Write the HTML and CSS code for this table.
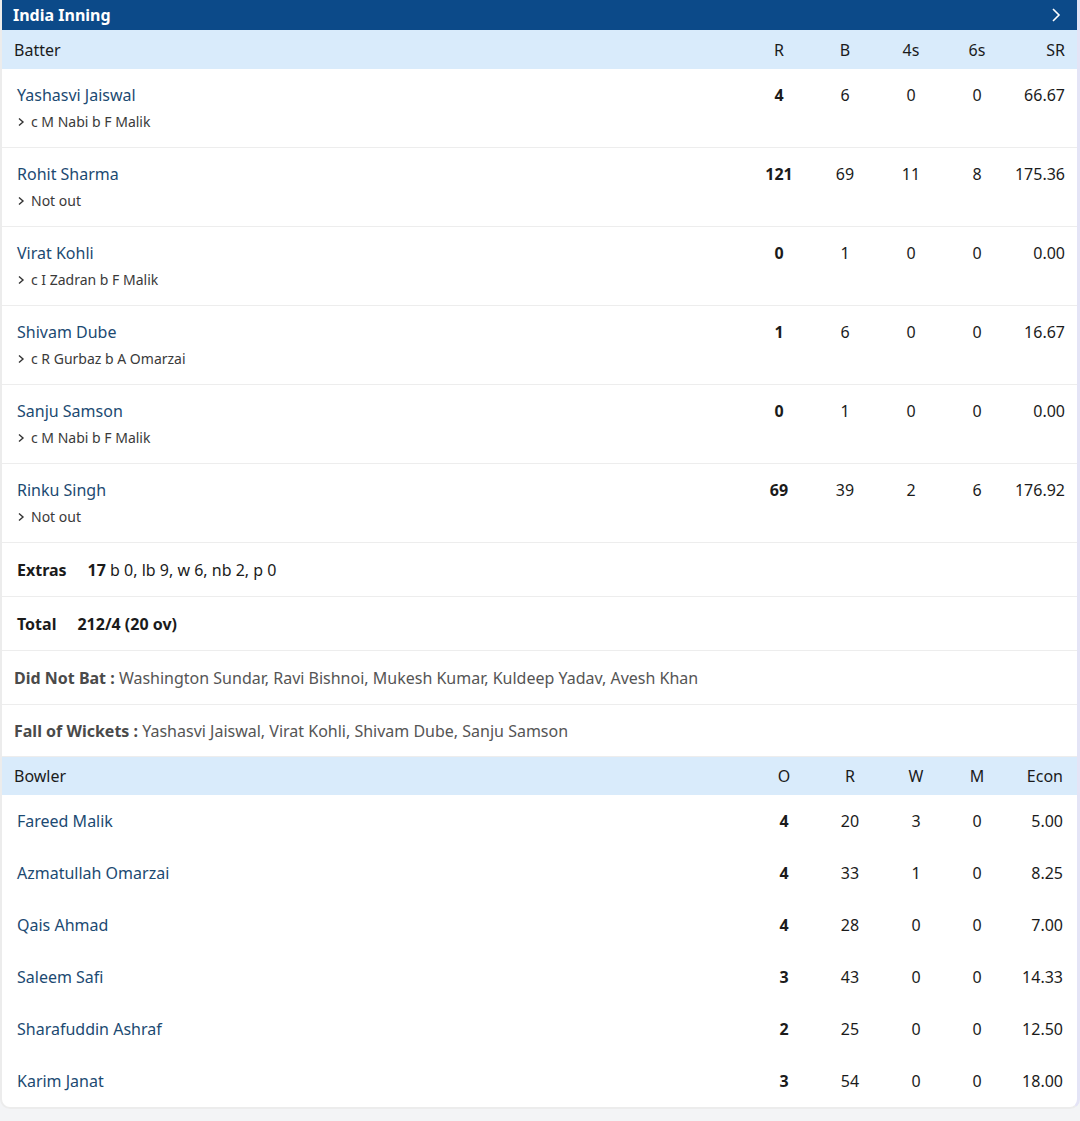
FILE: index.html
```html
<!DOCTYPE html>
<html lang="en">
<head>
    <meta charset="UTF-8">
    <meta name="viewport" content="width=device-width, initial-scale=1.0">
    <title>India Inning</title>
    <link rel="stylesheet" href="styles.css">
</head>
<body>
    <div class="card">
        <div class="inning-head">
            <span>India Inning</span>
            <svg class="chev" width="10" height="16" viewBox="0 0 10 16"><path d="M2 2l6 6-6 6" fill="none" stroke="#fff" stroke-width="1.6"/></svg>
        </div>

        <div class="row bat head">
            <div class="name-col">Batter</div>
            <div>R</div><div>B</div><div>4s</div><div>6s</div><div class="last">SR</div>
        </div>

        <div class="row bat player">
            <div class="name-col">
                <div class="name">Yashasvi Jaiswal</div>
                <div class="out"><svg class="arr" width="8" height="10" viewBox="0 0 8 10"><path d="M2 1.5l4 3.5-4 3.5" fill="none" stroke="#333" stroke-width="1.4"/></svg>c M Nabi b F Malik</div>
            </div>
            <div class="runs">4</div><div>6</div><div>0</div><div>0</div><div class="last">66.67</div>
        </div>
        <div class="row bat player">
            <div class="name-col">
                <div class="name">Rohit Sharma</div>
                <div class="out"><svg class="arr" width="8" height="10" viewBox="0 0 8 10"><path d="M2 1.5l4 3.5-4 3.5" fill="none" stroke="#333" stroke-width="1.4"/></svg>Not out</div>
            </div>
            <div class="runs">121</div><div>69</div><div>11</div><div>8</div><div class="last">175.36</div>
        </div>
        <div class="row bat player">
            <div class="name-col">
                <div class="name">Virat Kohli</div>
                <div class="out"><svg class="arr" width="8" height="10" viewBox="0 0 8 10"><path d="M2 1.5l4 3.5-4 3.5" fill="none" stroke="#333" stroke-width="1.4"/></svg>c I Zadran b F Malik</div>
            </div>
            <div class="runs">0</div><div>1</div><div>0</div><div>0</div><div class="last">0.00</div>
        </div>
        <div class="row bat player">
            <div class="name-col">
                <div class="name">Shivam Dube</div>
                <div class="out"><svg class="arr" width="8" height="10" viewBox="0 0 8 10"><path d="M2 1.5l4 3.5-4 3.5" fill="none" stroke="#333" stroke-width="1.4"/></svg>c R Gurbaz b A Omarzai</div>
            </div>
            <div class="runs">1</div><div>6</div><div>0</div><div>0</div><div class="last">16.67</div>
        </div>
        <div class="row bat player">
            <div class="name-col">
                <div class="name">Sanju Samson</div>
                <div class="out"><svg class="arr" width="8" height="10" viewBox="0 0 8 10"><path d="M2 1.5l4 3.5-4 3.5" fill="none" stroke="#333" stroke-width="1.4"/></svg>c M Nabi b F Malik</div>
            </div>
            <div class="runs">0</div><div>1</div><div>0</div><div>0</div><div class="last">0.00</div>
        </div>
        <div class="row bat player">
            <div class="name-col">
                <div class="name">Rinku Singh</div>
                <div class="out"><svg class="arr" width="8" height="10" viewBox="0 0 8 10"><path d="M2 1.5l4 3.5-4 3.5" fill="none" stroke="#333" stroke-width="1.4"/></svg>Not out</div>
            </div>
            <div class="runs">69</div><div>39</div><div>2</div><div>6</div><div class="last">176.92</div>
        </div>

        <div class="line-row">
            <b class="lbl">Extras</b><b>17</b> b 0, lb 9, w 6, nb 2, p 0
        </div>
        <div class="line-row">
            <b class="lbl">Total</b><b>212/4 (20 ov)</b>
        </div>
        <div class="info-row">
            <b>Did Not Bat :</b> Washington Sundar, Ravi Bishnoi, Mukesh Kumar, Kuldeep Yadav, Avesh Khan
        </div>
        <div class="info-row">
            <b>Fall of Wickets :</b> Yashasvi Jaiswal, Virat Kohli, Shivam Dube, Sanju Samson
        </div>

        <div class="row bowl head">
            <div class="name-col">Bowler</div>
            <div>O</div><div>R</div><div>W</div><div>M</div><div class="last">Econ</div>
        </div>

        <div class="row bowl bowler">
            <div class="name">Fareed Malik</div>
            <div class="runs">4</div><div>20</div><div>3</div><div>0</div><div class="last">5.00</div>
        </div>
        <div class="row bowl bowler">
            <div class="name">Azmatullah Omarzai</div>
            <div class="runs">4</div><div>33</div><div>1</div><div>0</div><div class="last">8.25</div>
        </div>
        <div class="row bowl bowler">
            <div class="name">Qais Ahmad</div>
            <div class="runs">4</div><div>28</div><div>0</div><div>0</div><div class="last">7.00</div>
        </div>
        <div class="row bowl bowler">
            <div class="name">Saleem Safi</div>
            <div class="runs">3</div><div>43</div><div>0</div><div>0</div><div class="last">14.33</div>
        </div>
        <div class="row bowl bowler">
            <div class="name">Sharafuddin Ashraf</div>
            <div class="runs">2</div><div>25</div><div>0</div><div>0</div><div class="last">12.50</div>
        </div>
        <div class="row bowl bowler">
            <div class="name">Karim Janat</div>
            <div class="runs">3</div><div>54</div><div>0</div><div>0</div><div class="last">18.00</div>
        </div>
    </div>
</body>
</html>
```

FILE: styles.css
```css
body {
    margin: 0;
    background-color: #f3f4f6;
    font-family: "Noto Sans", "Open Sans", sans-serif;
    font-size: 16px;
    color: #1b1b1b;
}

.card {
    background-color: #fff;
    border-left: 2px solid #ececec;
    border-right: 3px solid #e4e4f6;
    border-bottom: 2px solid #ececec;
    border-radius: 0 0 10px 10px;
    overflow: hidden;
}

.inning-head {
    display: flex;
    justify-content: space-between;
    align-items: center;
    height: 30px;
    padding: 0 16px 0 12px;
    margin-left: -1px;
    background-color: #0c4a89;
    color: #fff;
    font-weight: 700;
    font-size: 16px;
    border-bottom: 1px solid #d9ebfb;
}

.row {
    display: grid;
    align-items: center;
    text-align: center;
}

.bat {
    grid-template-columns: 1fr 66px 66px 66px 66px 67px;
}

.bowl {
    grid-template-columns: 1fr 66px 66px 66px 56px 72px;
}

.row .last {
    text-align: right;
    padding-right: 12px;
}

.head {
    height: 38px;
    background-color: #d9ebfb;
    font-size: 16px;
}

.head .name-col {
    text-align: left;
    padding-left: 12px;
}

.player {
    height: 78px;
    border-bottom: 1px solid #ededed;
    align-items: start;
}

.player > div {
    padding-top: 15px;
}

.player .name-col {
    text-align: left;
    padding-left: 15px;
}

.name {
    color: #1c4a72;
    font-size: 16px;
    line-height: 22px;
}

.player > div:not(.name-col) {
    line-height: 22px;
}

.out {
    display: flex;
    align-items: center;
    margin-top: 6px;
    font-size: 14px;
    color: #3a3a3a;
    line-height: 20px;
}

.arr {
    margin-right: 6px;
}

.runs {
    font-weight: 700;
}

.line-row {
    height: 53px;
    line-height: 55px;
    padding-left: 15px;
    border-bottom: 1px solid #ededed;
}

.line-row .lbl {
    margin-right: 21px;
}

.info-row {
    height: 53px;
    line-height: 55px;
    padding-left: 12px;
    color: #555;
    border-bottom: 1px solid #ededed;
}

.info-row + .info-row {
    height: 51px;
    line-height: 52px;
}

.info-row b {
    color: #4a4a4a;
}

.bowler {
    height: 52px;
}

.bowler .name {
    text-align: left;
    padding-left: 15px;
}

.bowl .last {
    padding-right: 14px;
}
```
